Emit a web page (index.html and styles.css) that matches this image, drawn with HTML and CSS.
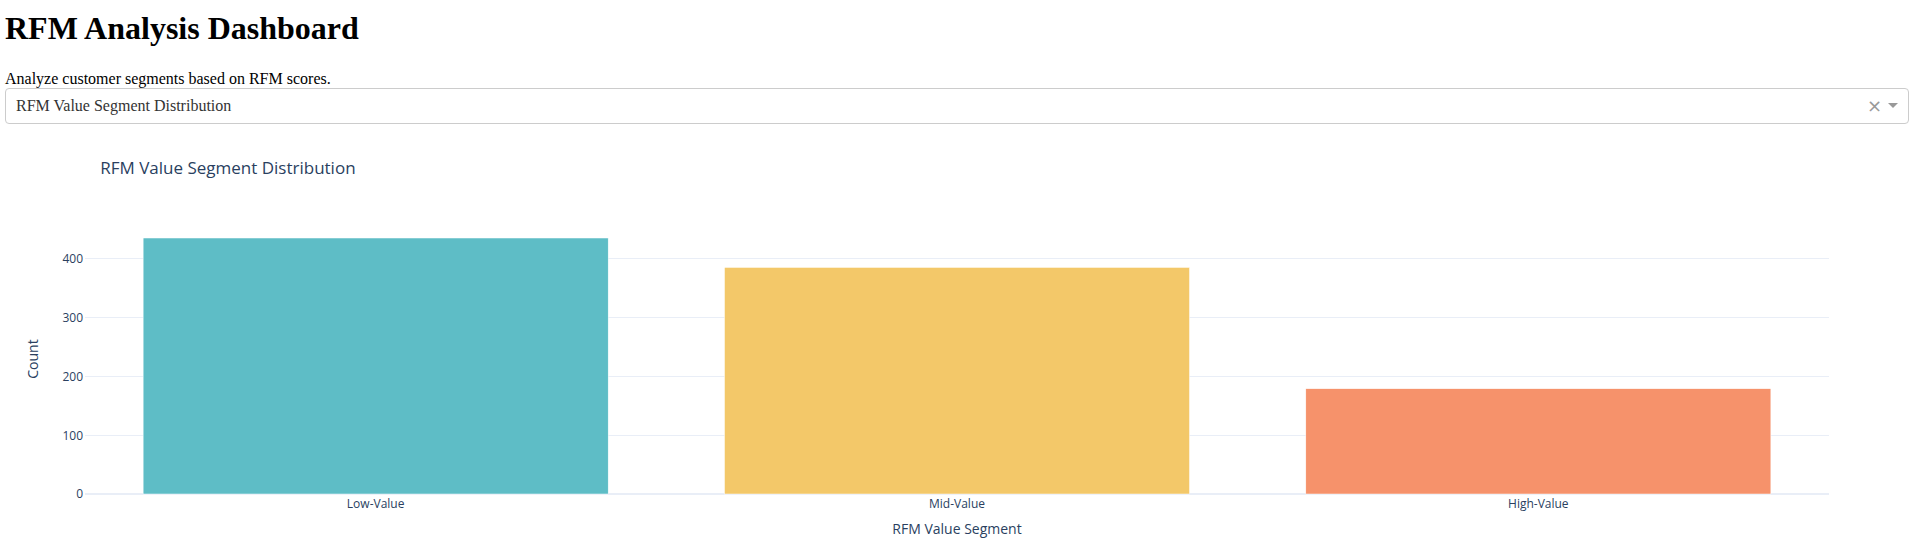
FILE: index.html
```html
<!DOCTYPE html>
<html lang="en">
<head>
<meta charset="utf-8">
<title>RFM Analysis Dashboard</title>
<link rel="stylesheet" href="styles.css">
</head>
<body>
<h1 class="page-title">RFM Analysis Dashboard</h1>
<div class="subtitle">Analyze customer segments based on RFM scores.</div>
<div class="select">
  <div class="select-control">
    <span class="select-value">RFM Value Segment Distribution</span>
    <span class="select-clear">×</span>
    <span class="select-arrow-zone"><span class="select-arrow"></span></span>
  </div>
</div>
<div class="graph">
  <svg class="chart" width="1904" height="450" viewBox="0 0 1904 450" xmlns="http://www.w3.org/2000/svg">
    <rect x="0" y="0" width="1904" height="450" fill="#ffffff"/>
    <g class="grid" stroke="#e9eef7" stroke-width="1">
      <line x1="80" x2="1824" y1="311.5" y2="311.5"/>
      <line x1="80" x2="1824" y1="252.5" y2="252.5"/>
      <line x1="80" x2="1824" y1="193.5" y2="193.5"/>
      <line x1="80" x2="1824" y1="134.5" y2="134.5"/>
    </g>
    <line x1="80" x2="1824" y1="370" y2="370" stroke="#e9eef7" stroke-width="2"/>
    <g class="bars" stroke="#ffffff" stroke-width="0.5">
      <rect x="138.13" y="114" width="465.07" height="256" fill="#5ebdc6"/>
      <rect x="719.47" y="143.4" width="465.07" height="226.6" fill="#f3c869"/>
      <rect x="1300.8" y="264.7" width="465.07" height="105.3" fill="#f6926b"/>
    </g>
    <g class="ytick" font-family="'Open Sans', Verdana, Arial, sans-serif" font-size="12" fill="#2a3f5f" text-anchor="end">
      <text x="78" y="374.2">0</text>
      <text x="78" y="315.7">100</text>
      <text x="78" y="256.7">200</text>
      <text x="78" y="197.7">300</text>
      <text x="78" y="138.7">400</text>
    </g>
    <g class="xtick" font-family="'Open Sans', Verdana, Arial, sans-serif" font-size="12" fill="#2a3f5f" text-anchor="middle">
      <text x="370.67" y="384">Low-Value</text>
      <text x="952" y="384">Mid-Value</text>
      <text x="1533.33" y="384">High-Value</text>
    </g>
    <text x="952" y="410" font-family="'Open Sans', Verdana, Arial, sans-serif" font-size="14" fill="#2a3f5f" text-anchor="middle">RFM Value Segment</text>
    <text transform="translate(33,235) rotate(-90)" font-family="'Open Sans', Verdana, Arial, sans-serif" font-size="14" fill="#2a3f5f" text-anchor="middle">Count</text>
    <text x="95.2" y="49.5" font-family="'Open Sans', Verdana, Arial, sans-serif" font-size="17" fill="#2a3f5f">RFM Value Segment Distribution</text>
  </svg>
</div>
</body>
</html>
```

FILE: styles.css
```css
html, body {
  background: #ffffff;
}
body {
  margin: 0;
  padding: 0 8px 0 5px;
  font-family: "Liberation Serif", "Times New Roman", serif;
  font-size: 16px;
  color: #000000;
}
.page-title {
  font-size: 32px;
  font-weight: bold;
  margin: 9.5px 0 23px 0;
  line-height: normal;
}
.subtitle {
  font-size: 16px;
  line-height: normal;
}
.select {
  position: relative;
}
.select-control {
  display: flex;
  align-items: center;
  height: 36px;
  box-sizing: border-box;
  border: 1px solid #cccccc;
  border-radius: 4px;
  background: #ffffff;
  color: #333333;
}
.select-value {
  flex: 1;
  padding: 0 10px;
  line-height: 34px;
  white-space: nowrap;
  overflow: hidden;
}
.select-clear {
  width: 17px;
  text-align: center;
  color: #999999;
  font-size: 18px;
  line-height: 1;
  font-family: "DejaVu Sans", "Liberation Sans", sans-serif;
}
.select-arrow-zone {
  width: 25px;
  box-sizing: border-box;
  padding-right: 5px;
  display: flex;
  justify-content: center;
  align-items: center;
}
.select-arrow {
  display: block;
  width: 0;
  height: 0;
  border-style: solid;
  border-width: 5px 5px 2.5px;
  border-color: #999999 transparent transparent;
  margin-top: 2px;
}
.graph {
  height: 450px;
}
.chart {
  display: block;
}
```
